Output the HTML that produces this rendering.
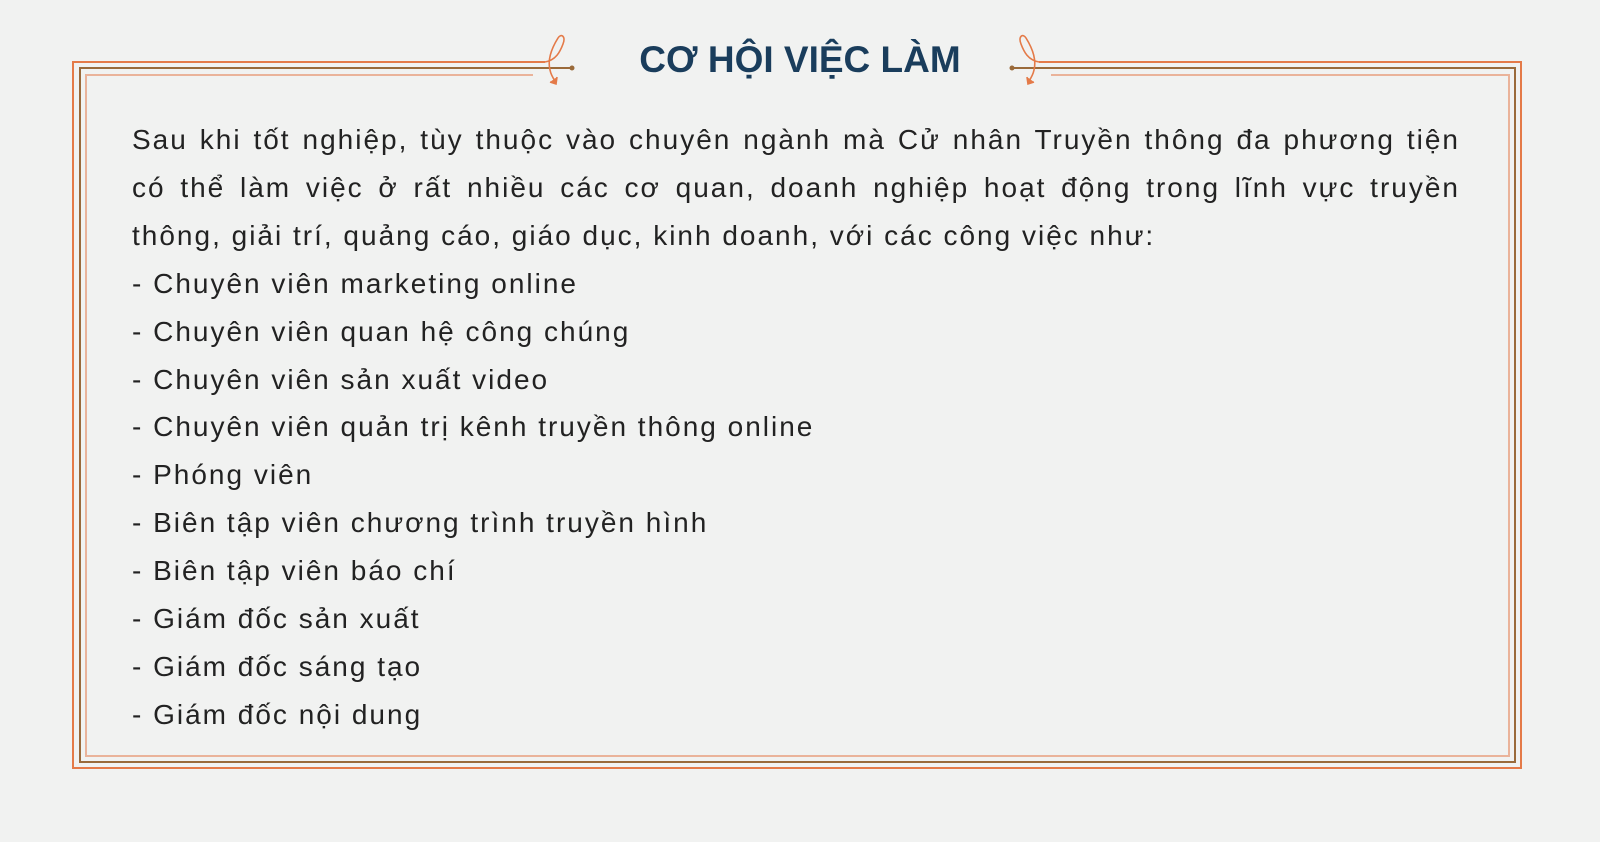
<!DOCTYPE html>
<html><head><meta charset="utf-8"><style>
html,body{margin:0;padding:0;background:#f1f2f1;}
body{width:1600px;height:842px;position:relative;overflow:hidden;font-family:"Liberation Sans",sans-serif;}
svg{position:absolute;left:0;top:0;}
h1{position:absolute;left:0;width:1600px;top:37px;margin:0;text-align:center;font-size:37px;font-weight:bold;color:#1a3d5c;letter-spacing:0;line-height:46px;}
.txt{position:absolute;left:132px;top:116px;width:1328px;font-size:28px;line-height:47.9px;color:#222;letter-spacing:2px;}
.j{text-align:justify;text-align-last:justify;}
</style></head><body>
<svg width="1600" height="842" viewBox="0 0 1600 842" fill="none">
  <path d="M545 62 H73 V768 H1521 V62 H1039" stroke="#e47a48" stroke-width="2"/>
  <path d="M572 68 H80 V762 H1515 V68 H1012" stroke="#9a6a3a" stroke-width="2"/>
  <path d="M533 75 H86 V756 H1509 V75 H1051" stroke="#eab39a" stroke-width="2"/>
  <circle cx="572" cy="68" r="2.5" fill="#9a6a3a"/>
  <path d="M545 62 C556 60 560 52 563 44 C566 36 561 33 558 38 C553 46 547 58 550 70 C551 75 553 78 555 81" stroke="#e47a48" stroke-width="1.6"/>
  <path d="M550 82 L556 84 L557 77" stroke="#e47a48" stroke-width="1.6" fill="#e47a48"/>
  <circle cx="1012" cy="68" r="2.5" fill="#9a6a3a"/>
  <path d="M1039 62 C1028 60 1024 52 1021 44 C1018 36 1023 33 1026 38 C1031 46 1037 58 1034 70 C1033 75 1031 78 1029 81" stroke="#e47a48" stroke-width="1.6"/>
  <path d="M1034 82 L1028 84 L1027 77" stroke="#e47a48" stroke-width="1.6" fill="#e47a48"/>
</svg>
<h1>CƠ HỘI VIỆC LÀM</h1>
<div class="txt">
<div class="j">Sau khi tốt nghiệp, tùy thuộc vào chuyên ngành mà Cử nhân Truyền thông đa phương tiện</div>
<div class="j">có thể làm việc ở rất nhiều các cơ quan, doanh nghiệp hoạt động trong lĩnh vực truyền</div>
<div>thông, giải trí, quảng cáo, giáo dục, kinh doanh, với các công việc như:</div>
<div>- Chuyên viên marketing online</div>
<div>- Chuyên viên quan hệ công chúng</div>
<div>- Chuyên viên sản xuất video</div>
<div>- Chuyên viên quản trị kênh truyền thông online</div>
<div>- Phóng viên</div>
<div>- Biên tập viên chương trình truyền hình</div>
<div>- Biên tập viên báo chí</div>
<div>- Giám đốc sản xuất</div>
<div>- Giám đốc sáng tạo</div>
<div>- Giám đốc nội dung</div>
</div>
</body></html>
